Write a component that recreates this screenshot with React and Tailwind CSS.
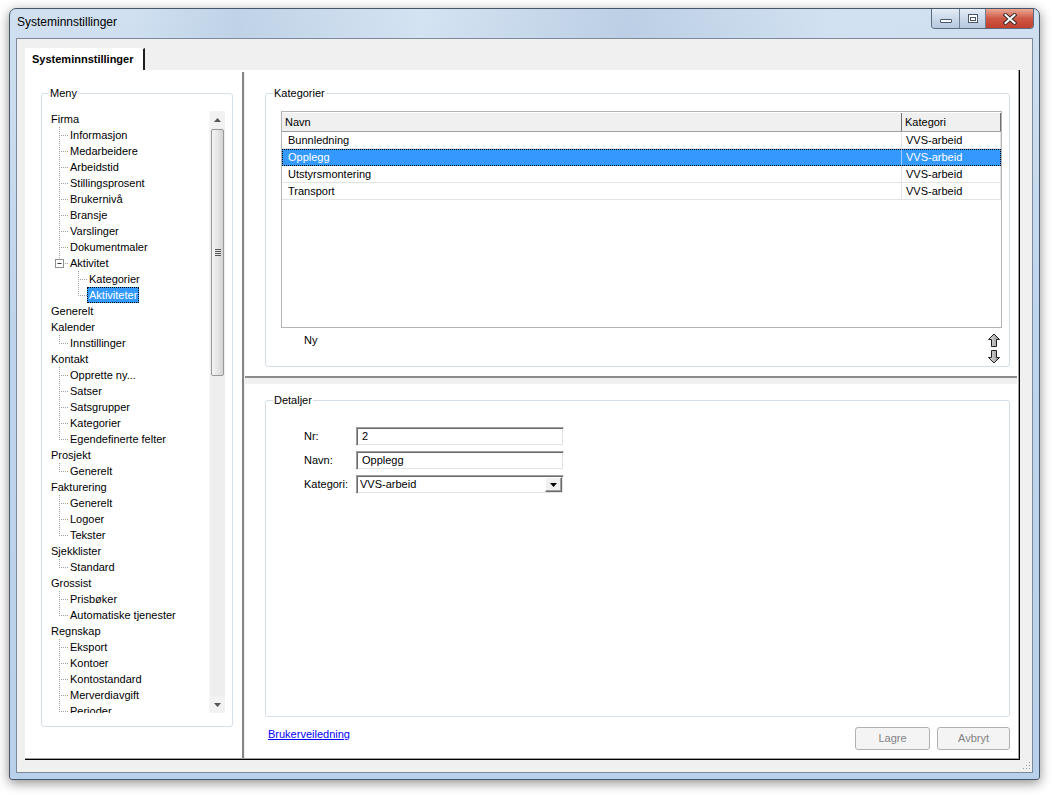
import React from 'react';

const tree = [
  {
    label: 'Firma',
    children: [
      'Informasjon',
      'Medarbeidere',
      'Arbeidstid',
      'Stillingsprosent',
      'Brukernivå',
      'Bransje',
      'Varslinger',
      'Dokumentmaler',
      { label: 'Aktivitet', children: ['Kategorier', 'Aktiviteter'] },
    ],
  },
  { label: 'Generelt' },
  { label: 'Kalender', children: ['Innstillinger'] },
  { label: 'Kontakt', children: ['Opprette ny...', 'Satser', 'Satsgrupper', 'Kategorier', 'Egendefinerte felter'] },
  { label: 'Prosjekt', children: ['Generelt'] },
  { label: 'Fakturering', children: ['Generelt', 'Logoer', 'Tekster'] },
  { label: 'Sjekklister', children: ['Standard'] },
  { label: 'Grossist', children: ['Prisbøker', 'Automatiske tjenester'] },
  { label: 'Regnskap', children: ['Eksport', 'Kontoer', 'Kontostandard', 'Merverdiavgift', 'Perioder'] },
];

const kategorier = [
  { navn: 'Bunnledning', kategori: 'VVS-arbeid' },
  { navn: 'Opplegg', kategori: 'VVS-arbeid', selected: true },
  { navn: 'Utstyrsmontering', kategori: 'VVS-arbeid' },
  { navn: 'Transport', kategori: 'VVS-arbeid' },
];

// flatten the tree into rows
const rows = [];
tree.forEach((root) => {
  rows.push({ depth: 0, label: root.label });
  (root.children || []).forEach((child, i, arr) => {
    const last = i === arr.length - 1;
    if (typeof child === 'string') {
      rows.push({ depth: 1, label: child, last });
    } else {
      rows.push({ depth: 1, label: child.label, last, expanded: true });
      child.children.forEach((g, j, garr) => {
        rows.push({ depth: 2, label: g, last: j === garr.length - 1, selected: g === 'Aktiviteter' });
      });
    }
  });
});

const Connector = ({ last }) => (
  <svg width="9" height="16" className="shrink-0">
    <line x1="0.5" y1="0" x2="0.5" y2={last ? 9 : 16} stroke="#a0a0a0" strokeDasharray="1 1" />
    <line x1="2" y1="8.5" x2="9" y2="8.5" stroke="#a0a0a0" strokeDasharray="1 1" />
  </svg>
);

const Expander = () => (
  <svg width="14" height="16" className="shrink-0">
    <line x1="5.5" y1="0" x2="5.5" y2="4" stroke="#a0a0a0" strokeDasharray="1 1" />
    <rect x="1.5" y="4.5" width="8" height="8" fill="#fff" stroke="#919191" />
    <line x1="3.5" y1="8.5" x2="7.5" y2="8.5" stroke="#333" />
    <line x1="11" y1="8.5" x2="14" y2="8.5" stroke="#a0a0a0" strokeDasharray="1 1" />
  </svg>
);

const TreeRow = ({ row }) => {
  const label = (
    <span
      className={`h-4 leading-[16px] whitespace-nowrap px-[2px] ${
        row.selected ? 'bg-[#3399ff] text-white outline outline-1 outline-dotted outline-black -outline-offset-1' : 'text-black'
      }`}
    >
      {row.label}
    </span>
  );
  if (row.depth === 0) {
    return (
      <div className="flex h-4">
        <span className="h-4 leading-[16px] whitespace-nowrap pl-[1px]">{row.label}</span>
      </div>
    );
  }
  if (row.expanded) {
    return (
      <div className="flex h-4">
        <div className="w-[4px] shrink-0" />
        <Expander />
        {label}
      </div>
    );
  }
  return (
    <div className="flex h-4">
      <div className={`${row.depth === 1 ? 'w-[9px]' : 'w-[28px]'} shrink-0`} />
      <Connector last={row.last} />
      {label}
    </div>
  );
};

const ScrollArrow = ({ down }) => (
  <svg width="7" height="4" viewBox="0 0 7 4">
    <polygon points={down ? '0,0 7,0 3.5,4' : '0,4 7,4 3.5,0'} fill="#555" />
  </svg>
);

const Scrollbar = () => (
  <div className="w-[16px] shrink-0 flex flex-col bg-[#eeeeee] border-l border-[#f7f7f7]">
    <div className="h-[17px] flex items-center justify-center bg-[#f2f2f2]">
      <ScrollArrow />
    </div>
    <div className="mt-[1px] mx-[1px] h-[247px] rounded-[2px] border border-[#999] bg-gradient-to-r from-[#f4f4f4] via-[#e6e6e6] to-[#d3d3d3] flex flex-col items-center justify-center gap-[1px]">
      <div className="w-[6px] h-[1px] bg-[#555]" />
      <div className="w-[6px] h-[1px] bg-[#555]" />
      <div className="w-[6px] h-[1px] bg-[#555]" />
      <div className="w-[6px] h-[1px] bg-[#555]" />
    </div>
    <div className="flex-1" />
    <div className="h-[17px] flex items-center justify-center bg-[#f2f2f2]">
      <ScrollArrow down />
    </div>
  </div>
);

const GroupBox = ({ title, className, children }) => (
  <div className={`relative border border-[#d5dfe5] rounded-[3px] ${className}`}>
    <span className="absolute -top-[7px] left-[7px] px-[1px] bg-white leading-[13px]">{title}</span>
    {children}
  </div>
);

const MoveArrow = ({ down }) => (
  <svg width="14" height="14" viewBox="0 0 14 14">
    <defs>
      <linearGradient id={down ? 'gd' : 'gu'} x1="0" y1="0" x2="1" y2="0">
        <stop offset="0" stopColor="#e8e8e8" />
        <stop offset="1" stopColor="#8a8a8a" />
      </linearGradient>
    </defs>
    <polygon
      points={
        down
          ? '4.5,0.5 9.5,0.5 9.5,7.5 12.5,7.5 7,13 1.5,7.5 4.5,7.5'
          : '7,1 12.5,6.5 9.5,6.5 9.5,13.5 4.5,13.5 4.5,6.5 1.5,6.5'
      }
      fill={`url(#${down ? 'gd' : 'gu'})`}
      stroke="#222"
      strokeLinejoin="miter"
    />
  </svg>
);

const Sunken = ({ className, children }) => (
  <div
    className={`h-[19px] border border-t-[#a0a0a0] border-l-[#a0a0a0] border-r-white border-b-white shadow-[inset_1px_1px_0_#696969,inset_-1px_-1px_0_#e3e3e3] bg-white flex items-center ${className}`}
  >
    {children}
  </div>
);

const Field = ({ label, children }) => (
  <div className="flex items-center h-[19px]">
    <span className="w-[52px] shrink-0">{label}</span>
    {children}
  </div>
);

const TitleButtons = () => (
  <div className="flex h-[20px] rounded-b-[4px] border border-t-0 border-[#5b6b80] overflow-hidden">
    <div className="w-[28px] border-r border-[#6f7f94] bg-gradient-to-b from-[#e4ecf6] via-[#ccd9ea] to-[#b5c8de] flex items-end justify-center pb-[5px]">
      <div className="w-[12px] h-[4px] bg-white border border-[#48566a] rounded-[1px]" />
    </div>
    <div className="w-[26px] border-r border-[#6f7f94] bg-gradient-to-b from-[#e4ecf6] via-[#ccd9ea] to-[#b5c8de] flex items-center justify-center">
      <div className="w-[10px] h-[9px] border border-[#48566a] bg-white flex items-center justify-center">
        <div className="w-[6px] h-[4px] border border-[#48566a] mt-[1px]" />
      </div>
    </div>
    <div className="w-[47px] bg-gradient-to-b from-[#e9a795] via-[#cf5745] to-[#c1402d] flex items-center justify-center">
      <svg width="14" height="12" viewBox="0 0 14 12">
        <path d="M2.5 2 L11.5 10 M11.5 2 L2.5 10" stroke="#3b2a2a" strokeWidth="4" strokeLinecap="square" />
        <path d="M2.5 2 L11.5 10 M11.5 2 L2.5 10" stroke="#fff" strokeWidth="2" strokeLinecap="square" />
      </svg>
    </div>
  </div>
);

export default function App() {
  return (
    <div className="w-[1055px] h-[795px] bg-white pl-[9px] pt-[8px] font-['Liberation_Sans',Arial,sans-serif] text-[11px] leading-[13px] text-black overflow-hidden">
      {/* Window */}
      <div className="w-[1031px] h-[772px] flex flex-col rounded-t-[7px] rounded-b-[3px] border border-[#46566a] bg-[linear-gradient(180deg,#d0e0f1_0%,#bfd5ec_40%,#b8d0e9_100%)] shadow-[0_3px_12px_rgba(0,0,0,0.45)]">
        {/* Title bar */}
        <div className="h-[29px] shrink-0 flex items-start pl-[7px] pr-[5px] bg-[linear-gradient(90deg,rgba(255,255,255,0)_0%,rgba(255,255,255,0)_12%,rgba(120,150,185,0.18)_22%,rgba(255,255,255,0.1)_40%,rgba(110,140,180,0.2)_60%,rgba(255,255,255,0.05)_80%,rgba(255,255,255,0)_100%)]">
          <span className="pt-[6px] text-[12px] leading-[15px] text-black">Systeminnstillinger</span>
          <div className="flex-1" />
          <TitleButtons />
        </div>

        {/* Client area */}
        <div className="relative flex-1 mx-[6px] mb-[6px] border border-[#7d8a99] bg-[#f0f0f0] flex flex-col">
          {/* Tab strip */}
          <div className="flex pl-[8px] pt-[9px]">
            <div className="w-[120px] h-[22px] bg-white border-t border-l border-white border-r-2 border-r-[#1e1e1e] flex items-center pl-[6px] font-bold">
              Systeminnstillinger
            </div>
          </div>

          {/* Tab page */}
          <div className="ml-[8px] mr-[12px] mb-[12px] flex-1 bg-white border-r border-b border-black shadow-[inset_-1px_-1px_0_#a0a0a0] flex">
            {/* Left panel */}
            <div className="w-[217px] shrink-0 pl-[16px] pt-[23px]">
              <GroupBox title="Meny" className="w-[192px] h-[634px] pt-[17px] pl-[8px] pr-[7px]">
                <div className="h-[602px] flex">
                  <div className="flex-1 overflow-hidden">
                    {rows.map((row, i) => (
                      <TreeRow key={i} row={row} />
                    ))}
                  </div>
                  <Scrollbar />
                </div>
              </GroupBox>
            </div>

            {/* Vertical splitter */}
            <div className="w-[3px] shrink-0 mt-[2px] mb-[1px] border-l-2 border-[#858585] bg-[#f0f0f0]" />

            {/* Right panel */}
            <div className="flex-1 flex flex-col pr-[9px]">
              {/* Kategorier */}
              <div className="h-[306px] shrink-0 pl-[20px] pt-[23px]">
                <GroupBox title="Kategorier" className="h-[274px] pt-[17px] pl-[15px] pr-[7px]">
                  <div className="h-[217px] border border-[#b4b4b4] bg-white flex flex-col">
                    <div className="flex h-[20px] bg-[#f0f0f0] border-b border-[#a0a0a0] border-t border-t-white">
                      <div className="w-[620px] border-r border-[#707070] pl-[3px] flex items-center">Navn</div>
                      <div className="w-[99px] border-r border-[#707070] pl-[3px] flex items-center">Kategori</div>
                    </div>
                    {kategorier.map((k) => (
                      <div
                        key={k.navn}
                        className={`flex h-[17px] border-b ${
                          k.selected
                            ? 'bg-[#3399ff] text-white border-[#3399ff] outline outline-1 outline-dotted outline-black -outline-offset-1'
                            : 'border-[#e3e3e3]'
                        }`}
                      >
                        <div className={`w-[620px] border-r pl-[6px] flex items-center ${k.selected ? 'border-[#9cc9ff]' : 'border-[#e3e3e3]'}`}>
                          {k.navn}
                        </div>
                        <div className={`w-[99px] border-r pl-[4px] flex items-center ${k.selected ? 'border-[#3399ff]' : 'border-[#e3e3e3]'}`}>
                          {k.kategori}
                        </div>
                      </div>
                    ))}
                  </div>
                  <div className="flex items-start mt-[5px]">
                    <span className="ml-[23px] mt-[1px]">Ny</span>
                    <div className="flex-1" />
                    <div className="flex flex-col gap-[3px] mr-[1px]">
                      <MoveArrow />
                      <MoveArrow down />
                    </div>
                  </div>
                </GroupBox>
              </div>

              {/* Horizontal splitter */}
              <div className="h-[2px] shrink-0 bg-[#8c8c8c] mr-[-7px]" />
              <div className="h-[6px] shrink-0 bg-[#f0f0f0] mr-[-7px]" />

              {/* Detaljer */}
              <div className="flex-1 flex flex-col pl-[20px] pt-[16px]">
                <GroupBox title="Detaljer" className="h-[317px] pt-[26px] pl-[38px]">
                  <div className="flex flex-col gap-[5px]">
                    <Field label="Nr:">
                      <Sunken className="w-[208px] pl-[5px]">2</Sunken>
                    </Field>
                    <Field label="Navn:">
                      <Sunken className="w-[208px] pl-[5px]">Opplegg</Sunken>
                    </Field>
                    <Field label="Kategori:">
                      <Sunken className="w-[208px] pl-[3px] pr-[1px]">
                        <span className="flex-1">VVS-arbeid</span>
                        <div className="w-[17px] h-[15px] bg-[#f0f0f0] border border-t-white border-l-white border-r-[#696969] border-b-[#696969] shadow-[inset_-1px_-1px_0_#a0a0a0] flex items-center justify-center">
                          <svg width="7" height="4" viewBox="0 0 7 4">
                            <polygon points="0,0 7,0 3.5,4" fill="#000" />
                          </svg>
                        </div>
                      </Sunken>
                    </Field>
                  </div>
                </GroupBox>

                <div className="flex items-start mt-[10px]">
                  <a className="ml-[3px] mt-[1px] text-[#0000ff] underline cursor-pointer">Brukerveiledning</a>
                  <div className="flex-1" />
                  <button className="w-[75px] h-[23px] rounded-[3px] border border-[#adb2b5] bg-[#f4f4f4] text-[#838383]">
                    Lagre
                  </button>
                  <button className="ml-[7px] w-[73px] h-[23px] rounded-[3px] border border-[#adb2b5] bg-[#f4f4f4] text-[#838383]">
                    Avbryt
                  </button>
                </div>
              </div>
            </div>
          </div>

          {/* Resize grip */}
          <svg width="10" height="10" viewBox="0 0 10 10" className="absolute right-[1px] bottom-[1px]">
            {[
              [8, 0], [8, 3], [5, 3], [8, 6], [5, 6], [2, 6],
            ].map(([x, y], i) => (
              <rect key={i} x={x} y={y + 1} width="1" height="1" fill="#9a9a9a" />
            ))}
          </svg>
        </div>
      </div>
    </div>
  );
}
